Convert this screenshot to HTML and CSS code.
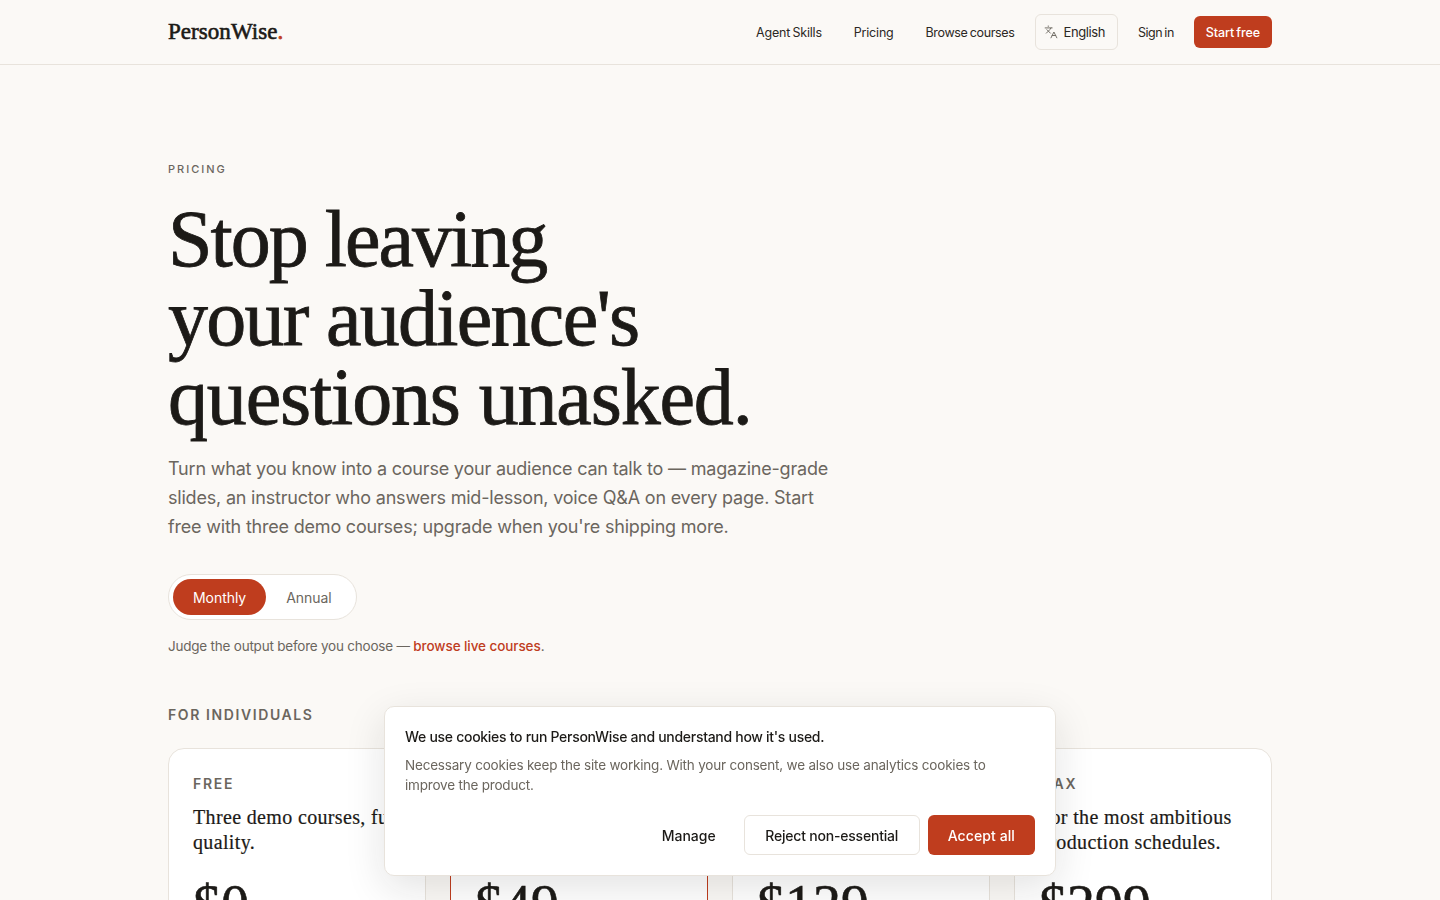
FILE: index.html
```html
<!DOCTYPE html>
<html lang="en">
<head>
<meta charset="utf-8">
<title>Pricing — PersonWise</title>
<link rel="stylesheet" href="styles.css">
</head>
<body>
<header class="site-header">
  <div class="wrap nav-row">
    <a class="logo" href="#">PersonWise<span class="logo-dot">.</span></a>
    <nav class="nav">
      <a class="nav-link" href="#">Agent Skills</a>
      <a class="nav-link" href="#">Pricing</a>
      <a class="nav-link browse" href="#">Browse courses</a>
      <button class="lang">
        <svg class="lang-icon" width="14" height="14" viewBox="0 0 24 24" fill="none" stroke="currentColor" stroke-width="1.6" stroke-linecap="round" stroke-linejoin="round"><path d="m5 8 6 6"/><path d="m4 14 6-6 2-3"/><path d="M2 5h12"/><path d="M7 2h1"/><path d="m22 22-5-10-5 10"/><path d="M14 18h6"/></svg>
        English
      </button>
      <a class="nav-link signin" href="#">Sign in</a>
      <a class="cta" href="#">Start free</a>
    </nav>
  </div>
</header>
<main class="wrap main">
  <p class="eyebrow">PRICING</p>
  <h1 class="title"><span class="line-a">Stop leaving</span><br><span class="line-b">your audience's</span><br><span class="line-c">questions unasked.</span></h1>
  <p class="lede">Turn what you know into a course your audience can talk to — magazine-grade slides, an instructor who answers mid-lesson, voice Q&amp;A on every page. Start free with three demo courses; upgrade when you're shipping more.</p>
  <div class="toggle">
    <button class="toggle-btn is-on">Monthly</button>
    <button class="toggle-btn">Annual</button>
  </div>
  <p class="judge">Judge the output before you choose — <a class="judge-link" href="#">browse live courses</a>.</p>
  <h2 class="group">FOR INDIVIDUALS</h2>
  <section class="plans">
    <article class="plan">
      <h3 class="plan-name">FREE</h3>
      <p class="plan-desc">Three demo courses, full quality.</p>
      <p class="price">$0</p>
    </article>
    <article class="plan plan-featured">
      <h3 class="plan-name">PRO</h3>
      <p class="plan-desc">For creators shipping a course each month.</p>
      <p class="price">$49</p>
    </article>
    <article class="plan">
      <h3 class="plan-name">TEAM</h3>
      <p class="plan-desc">For serious educators with a growing catalog.</p>
      <p class="price">$129</p>
    </article>
    <article class="plan">
      <h3 class="plan-name">MAX</h3>
      <p class="plan-desc">For the most ambitious production schedules.</p>
      <p class="price">$299</p>
    </article>
  </section>
</main>
<aside class="cookie">
  <p class="cookie-title">We use cookies to run PersonWise and understand how it's used.</p>
  <p class="cookie-text">Necessary cookies keep the site working. With your consent, we also use analytics cookies to improve the product.</p>
  <div class="cookie-actions">
    <button class="btn btn-ghost">Manage</button>
    <button class="btn btn-outline">Reject non-essential</button>
    <button class="btn btn-solid">Accept all</button>
  </div>
</aside>
</body>
</html>
```
FILE: styles.css
```css
* { box-sizing: border-box; }
html, body { margin: 0; padding: 0; }
body {
  background: #fbf9f6;
  color: #1c1a17;
  font-family: "Inter", "Liberation Sans", sans-serif;
}
a { color: inherit; text-decoration: none; }
button { font-family: inherit; cursor: pointer; }
.wrap { width: 1104px; margin: 0 auto; }
.site-header { height: 65px; border-bottom: 1px solid #e8e3dc; }
.nav-row { height: 64px; display: flex; align-items: center; justify-content: space-between; }
.logo { font-family: "Liberation Serif", serif; font-size: 23px; font-weight: 400; letter-spacing: 0.05px; -webkit-text-stroke: 0.6px #1c1a17; color: #1c1a17; }
.logo-dot { color: #bf3d1e; -webkit-text-stroke: 0.8px #bf3d1e; }
.nav { display: flex; align-items: center; font-size: 12.5px; letter-spacing: -0.2px; word-spacing: -1px; color: #2b2824; }
.nav-link { margin-right: 32px; }
.browse { margin-right: 20px; letter-spacing: -0.34px; }
.signin { margin-left: 20px; margin-right: 20px; letter-spacing: -0.45px; }
.lang { display: flex; align-items: center; gap: 6px; height: 36px; padding: 0 12px 0 8px; background: transparent; border: 1px solid #e8e3dc; border-radius: 6px; font-size: 13px; letter-spacing: -0.42px; color: #2b2824; }
.lang-icon { color: #6b665e; }
.cta { display: flex; align-items: center; height: 32px; padding: 0 12px; background: #bf3d1e; color: #fff; border-radius: 6px; font-weight: 500; letter-spacing: -0.1px; }
.main { padding-top: 97px; padding-bottom: 80px; }
.eyebrow { margin: 0; height: 14px; font-size: 11px; line-height: 14px; font-weight: 500; letter-spacing: 2px; color: #6b665e; }
.title { margin: 24px 0 0; font-family: "Liberation Serif", serif; font-weight: 400; font-size: 80px; line-height: 79px; -webkit-text-stroke: 0.8px #1c1a17; color: #1c1a17; }
.line-a { letter-spacing: -2px; }
.line-b { letter-spacing: -1.73px; }
.line-c { letter-spacing: -1.16px; }
.lede { margin: 17px 0 0; width: 680px; font-size: 18px; line-height: 29px; color: #6b665e; letter-spacing: -0.2px; }
.toggle { display: inline-flex; margin-top: 33px; padding: 4px; border: 1px solid #e8e3dc; border-radius: 999px; background: #fff; gap: 0; }
.toggle-btn { height: 36px; padding: 0 20px; border: 0; border-radius: 999px; background: transparent; font-size: 14px; letter-spacing: -0.05px; color: #6b665e; }
.toggle-btn.is-on { background: #bf3d1e; color: #fff; }
.judge { margin: 16px 0 0; font-size: 13.5px; line-height: 20px; color: #6b665e; letter-spacing: -0.22px; }
.judge-link { color: #bf3d1e; font-weight: 500; letter-spacing: -0.08px; }
.group { margin: 49px 0 0; font-size: 14px; line-height: 20px; font-weight: 600; letter-spacing: 1.6px; color: #6b665e; }
.plans { display: grid; grid-template-columns: repeat(4, 1fr); gap: 24px; margin-top: 23px; }
.plan { height: 400px; padding: 25px 24px 24px; background: #fff; border: 1px solid #e8e3dc; border-radius: 16px; }
.plan-featured { border-color: #bf3d1e; }
.plan-name { margin: 0; font-size: 14px; line-height: 20px; font-weight: 600; letter-spacing: 1.7px; color: #6b665e; }
.plan-desc { margin: 11px 0 0; font-family: "Liberation Serif", serif; font-size: 20px; line-height: 25px; letter-spacing: 0.35px; -webkit-text-stroke: 0.2px #1c1a17; color: #1c1a17; }
.price { margin: 18px 0 0; font-family: "Liberation Serif", serif; font-size: 56px; line-height: 64px; -webkit-text-stroke: 0.6px #1c1a17; color: #1c1a17; }
.cookie { position: fixed; left: 384px; bottom: 24px; width: 672px; height: 170px; padding: 20px; background: #fff; border: 1px solid #e8e3dc; border-radius: 10px; box-shadow: 0 12px 40px rgba(28, 26, 23, 0.12); }
.cookie-title { margin: 0; font-size: 14px; line-height: 20px; font-weight: 500; letter-spacing: -0.29px; color: #1c1a17; }
.cookie-text { margin: 8px 0 0; font-size: 13.5px; line-height: 20px; color: #6b665e; letter-spacing: -0.2px; }
.cookie-actions { display: flex; justify-content: flex-end; gap: 8px; margin-top: 20px; }
.btn { height: 40px; padding: 0 20px; border-radius: 6px; font-size: 14px; font-weight: 500; }
.btn-ghost { background: transparent; border: 0; color: #1c1a17; }
.btn-outline { background: #fff; border: 1px solid #e8e3dc; color: #1c1a17; letter-spacing: -0.2px; padding: 0 20.5px; }
.btn-solid { background: #bf3d1e; border: 0; color: #fff; letter-spacing: 0.1px; }
```
